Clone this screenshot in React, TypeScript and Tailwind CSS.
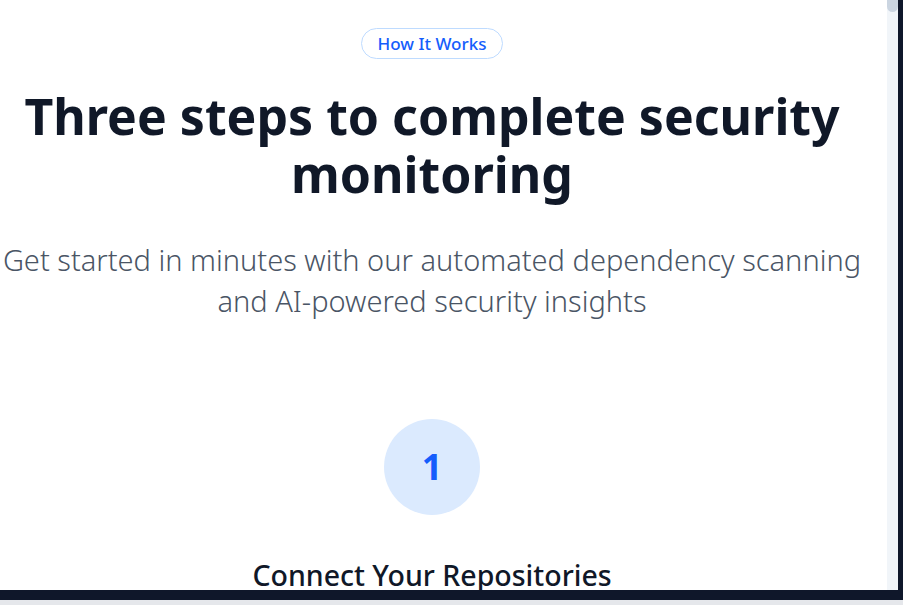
import React from 'react';

const App: React.FC = () => {
    return (
        <div className="w-[903px] h-[605px] bg-[#0f172a] flex flex-col overflow-hidden" style={{ fontFamily: '"Noto Sans", "Open Sans", sans-serif' }}>
            <div className="flex h-[590px]">
                <div className="w-[887px] h-full bg-white overflow-hidden">
                    <section className="w-[864px] flex flex-col items-center text-center pt-[28px]">
                        <span className="px-[16px] h-[31px] flex items-center rounded-full border border-blue-200 text-blue-600 text-[17px] font-medium">
                            How It Works
                        </span>
                        <h2 className="mt-[28px] text-[50px] leading-[58px] font-bold text-gray-900">
                            Three steps to complete security monitoring
                        </h2>
                        <p className="mt-[36px] w-[870px] text-[29px] leading-[41px] text-gray-600 font-light">
                            Get started in minutes with our automated dependency scanning and AI-powered security insights
                        </p>
                        <div className="mt-[98px] w-24 h-24 rounded-full bg-blue-100 flex items-center justify-center text-blue-600 text-[36px] font-bold">
                            1
                        </div>
                        <h3 className="mt-[42px] text-[28.5px] leading-[36px] font-medium text-gray-900">
                            Connect Your Repositories
                        </h3>
                    </section>
                </div>
                <div className="w-[11px] h-full bg-[#f1f5f9]">
                    <div className="w-full h-[12px] bg-[#cbd5e1] rounded-b-full" />
                </div>
            </div>
            <div className="h-[10px]" />
            <div className="h-[5px] bg-[#e5e7eb]" />
        </div>
    );
};

export default App;
